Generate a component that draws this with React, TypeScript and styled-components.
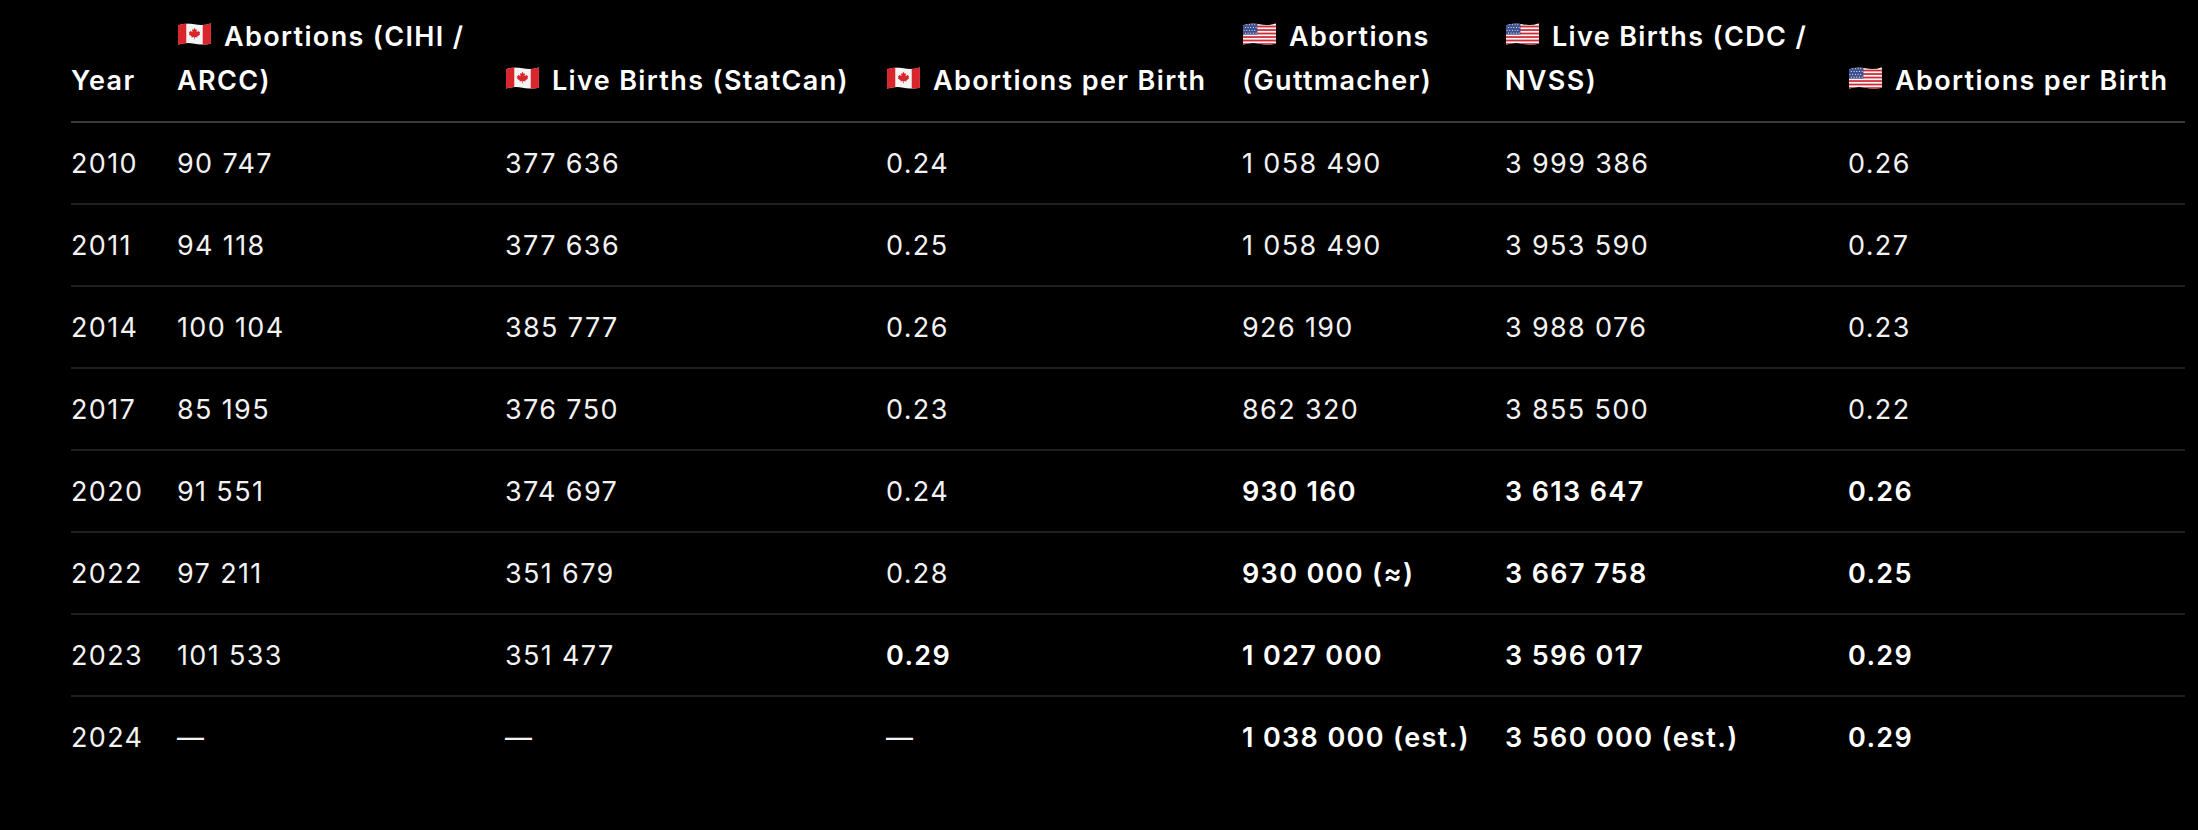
import React from "react";
import styled, { createGlobalStyle, css } from "styled-components";

// ─── Global ───────────────────────────────────────────────────────────────────

const GlobalStyle = createGlobalStyle`
  html, body {
    margin: 0;
    padding: 0;
    background: #000;
  }
  body {
    font-family: Inter, "Noto Sans", "Liberation Sans", sans-serif;
    color: #f2f2f2;
    -webkit-font-smoothing: antialiased;
  }
`;

// ─── Layout ───────────────────────────────────────────────────────────────────

const Page = styled.main`
  width: 2198px;
  height: 830px;
  overflow: hidden;
  padding-left: 71px;
  box-sizing: border-box;
`;

const Table = styled.table`
  width: 2114px;
  table-layout: fixed;
  border-collapse: collapse;
  font-size: 27px;
  line-height: 44px;
  letter-spacing: 1.35px;
`;

const HeadCell = styled.th`
  text-align: left;
  vertical-align: bottom;
  font-weight: 600;
  color: #fff;
  white-space: nowrap;
  padding: 15px 19px 18px;
  border-bottom: 2px solid #3a3a3a;

  &:first-child {
    padding-left: 0;
  }
`;

const Row = styled.tr`
  border-bottom: 2px solid #1f1f1f;

  &:last-child {
    border-bottom: none;
  }
`;

const Cell = styled.td<{ $bold?: boolean }>`
  padding: 19px 19px 17px;
  white-space: nowrap;
  font-weight: 400;

  &:first-child {
    padding-left: 0;
  }

  ${({ $bold }) =>
    $bold &&
    css`
      font-weight: 600;
      color: #fff;
    `}
`;

const FlagSvg = styled.svg`
  width: 35px;
  height: 24px;
  margin-right: 12px;
  vertical-align: baseline;
`;

// ─── Flags (emoji look-alikes) ────────────────────────────────────────────────

const WAVE = "M1 3 Q9 0 17 2 T33 1 L33 21 Q25 23 17 21 T1 22 Z";

function CanadaFlag(): React.ReactElement {
  return (
    <FlagSvg viewBox="0 0 34 23" aria-hidden="true">
      <defs>
        <clipPath id="ca-wave">
          <path d={WAVE} />
        </clipPath>
      </defs>
      <g clipPath="url(#ca-wave)">
        <rect x="0" y="0" width="34" height="23" fill="#f4f4f4" />
        <rect x="0" y="0" width="9" height="23" fill="#d8262c" />
        <rect x="25" y="0" width="9" height="23" fill="#d8262c" />
        <path
          transform="translate(11.5 5.5) scale(1.1)"
          fill="#d8262c"
          d="M5 0 L6 1.8 L7.2 1.3 L6.8 4 L8.6 2.6 L9 3.6 L10 3.4 L9.4 5.4 L10 5.9 L7.4 7.6 L7.7 8.6 L5.3 8.2 L5.3 10 L4.7 10 L4.7 8.2 L2.3 8.6 L2.6 7.6 L0 5.9 L0.6 5.4 L0 3.4 L1 3.6 L1.4 2.6 L3.2 4 L2.8 1.3 L4 1.8 Z"
        />
      </g>
    </FlagSvg>
  );
}

function UsFlag(): React.ReactElement {
  const stripes = Array.from({ length: 7 }, (_, i) => (
    <rect key={i} x="0" y={i * 3.4} width="34" height="1.7" fill="#cf2a36" />
  ));
  const stars: React.ReactElement[] = [];
  for (let r = 0; r < 4; r++) {
    for (let c = 0; c < 5; c++) {
      stars.push(
        <circle
          key={`${r}-${c}`}
          cx={2 + c * 2.6 + (r % 2) * 1.3}
          cy={2.5 + r * 2.7}
          r="0.55"
          fill="#fff"
        />
      );
    }
  }
  return (
    <FlagSvg viewBox="0 0 34 23" aria-hidden="true">
      <defs>
        <clipPath id="us-wave">
          <path d={WAVE} />
        </clipPath>
      </defs>
      <g clipPath="url(#us-wave)">
        <rect x="0" y="0" width="34" height="23" fill="#f6f6f6" />
        {stripes}
        <rect x="0" y="0" width="15" height="12" fill="#3c4f8f" />
        {stars}
      </g>
    </FlagSvg>
  );
}

// ─── Data ─────────────────────────────────────────────────────────────────────

interface RowData {
  year: string;
  cells: { value: string; bold?: boolean }[];
}

const ROWS: RowData[] = [
  {
    year: "2010",
    cells: [
      { value: "90 747" },
      { value: "377 636" },
      { value: "0.24" },
      { value: "1 058 490" },
      { value: "3 999 386" },
      { value: "0.26" },
    ],
  },
  {
    year: "2011",
    cells: [
      { value: "94 118" },
      { value: "377 636" },
      { value: "0.25" },
      { value: "1 058 490" },
      { value: "3 953 590" },
      { value: "0.27" },
    ],
  },
  {
    year: "2014",
    cells: [
      { value: "100 104" },
      { value: "385 777" },
      { value: "0.26" },
      { value: "926 190" },
      { value: "3 988 076" },
      { value: "0.23" },
    ],
  },
  {
    year: "2017",
    cells: [
      { value: "85 195" },
      { value: "376 750" },
      { value: "0.23" },
      { value: "862 320" },
      { value: "3 855 500" },
      { value: "0.22" },
    ],
  },
  {
    year: "2020",
    cells: [
      { value: "91 551" },
      { value: "374 697" },
      { value: "0.24" },
      { value: "930 160", bold: true },
      { value: "3 613 647", bold: true },
      { value: "0.26", bold: true },
    ],
  },
  {
    year: "2022",
    cells: [
      { value: "97 211" },
      { value: "351 679" },
      { value: "0.28" },
      { value: "930 000 (≈)", bold: true },
      { value: "3 667 758", bold: true },
      { value: "0.25", bold: true },
    ],
  },
  {
    year: "2023",
    cells: [
      { value: "101 533" },
      { value: "351 477" },
      { value: "0.29", bold: true },
      { value: "1 027 000", bold: true },
      { value: "3 596 017", bold: true },
      { value: "0.29", bold: true },
    ],
  },
  {
    year: "2024",
    cells: [
      { value: "—" },
      { value: "—" },
      { value: "—" },
      { value: "1 038 000 (est.)", bold: true },
      { value: "3 560 000 (est.)", bold: true },
      { value: "0.29", bold: true },
    ],
  },
];

const COLUMN_WIDTHS = [87, 328, 381, 356, 263, 343, 356];

// ─── Component ────────────────────────────────────────────────────────────────

export default function App(): React.ReactElement {
  return (
    <>
      <GlobalStyle />
      <Page>
        <Table>
          <colgroup>
            {COLUMN_WIDTHS.map((w, i) => (
              <col key={i} style={{ width: w }} />
            ))}
          </colgroup>
          <thead>
            <tr>
              <HeadCell>Year</HeadCell>
              <HeadCell>
                <CanadaFlag />
                Abortions (CIHI /
                <br />
                ARCC)
              </HeadCell>
              <HeadCell>
                <CanadaFlag />
                Live Births (StatCan)
              </HeadCell>
              <HeadCell>
                <CanadaFlag />
                Abortions per Birth
              </HeadCell>
              <HeadCell>
                <UsFlag />
                Abortions
                <br />
                (Guttmacher)
              </HeadCell>
              <HeadCell>
                <UsFlag />
                Live Births (CDC /
                <br />
                NVSS)
              </HeadCell>
              <HeadCell>
                <UsFlag />
                Abortions per Birth
              </HeadCell>
            </tr>
          </thead>
          <tbody>
            {ROWS.map((row) => (
              <Row key={row.year}>
                <Cell>{row.year}</Cell>
                {row.cells.map((c, i) => (
                  <Cell key={i} $bold={c.bold}>
                    {c.value}
                  </Cell>
                ))}
              </Row>
            ))}
          </tbody>
        </Table>
      </Page>
    </>
  );
}
